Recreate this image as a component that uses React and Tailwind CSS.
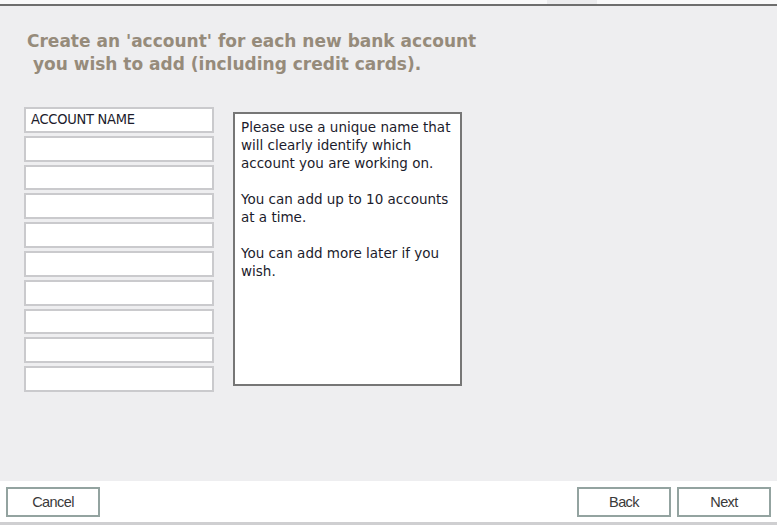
import React from 'react';

const rows = ['ACCOUNT NAME', '', '', '', '', '', '', '', '', ''];

function FooterButton({ children }) {
  return (
    <button className="h-[30px] w-[94px] border-2 border-[#93a3a0] bg-white pt-[1px] text-[14.5px] tracking-[-0.6px] text-[#3a3a3a] font-['Liberation_Sans',Arial,sans-serif]">
      {children}
    </button>
  );
}

export default function App() {
  return (
    <div className="flex h-[525px] w-[777px] flex-col overflow-hidden bg-white">
      {/* top tab strip */}
      <div className="flex h-[4px] bg-[#f9f9fa]">
        <div className="ml-[547px] w-[50px] bg-[#ececee]" />
      </div>
      <div className="h-[2px] bg-[#6e6e6e]" />

      {/* body */}
      <div className="flex flex-1 flex-col bg-[#eeeef0] pl-[24px] pt-[24px]">
        <h1 className="ml-[3px] text-[17px] font-bold leading-[23px] text-[#968b7b] font-['DejaVu_Sans',Verdana,sans-serif]">
          Create an 'account' for each new bank account
          <br />
          &nbsp;you wish to add (including credit cards).
        </h1>

        <div className="mt-[31px] flex items-start gap-[19px]">
          <div className="flex w-[190px] flex-col gap-[3px]">
            {rows.map((value, i) => (
              <div
                key={i}
                className="h-[25.8px] border-2 border-[#cacacd] bg-white px-[5px] text-[14.5px] leading-[21.8px] tracking-[-0.25px] text-[#1c1c2c] font-['DejaVu_Sans_Condensed','Liberation_Sans',sans-serif]"
              >
                {value}
              </div>
            ))}
          </div>

          <div className="mt-[5px] h-[274px] w-[229px] border-2 border-[#767676] bg-white px-[6px] pt-[4px] text-[13.5px] leading-[18px] text-[#1c1c2c] font-['DejaVu_Sans',Verdana,sans-serif]">
            <p>Please use a unique name that will clearly identify which account you are working on.</p>
            <p className="mt-[18px]">You can add up to 10 accounts at a time.</p>
            <p className="mt-[18px]">You can add more later if you wish.</p>
          </div>
        </div>
      </div>

      {/* footer */}
      <div className="flex h-[41px] items-start justify-between bg-white px-[6px] pt-[6px]">
        <FooterButton>Cancel</FooterButton>
        <div className="flex gap-[6px]">
          <FooterButton>Back</FooterButton>
          <FooterButton>Next</FooterButton>
        </div>
      </div>
      <div className="h-[3px] bg-[#cfcfd1]" />
    </div>
  );
}
